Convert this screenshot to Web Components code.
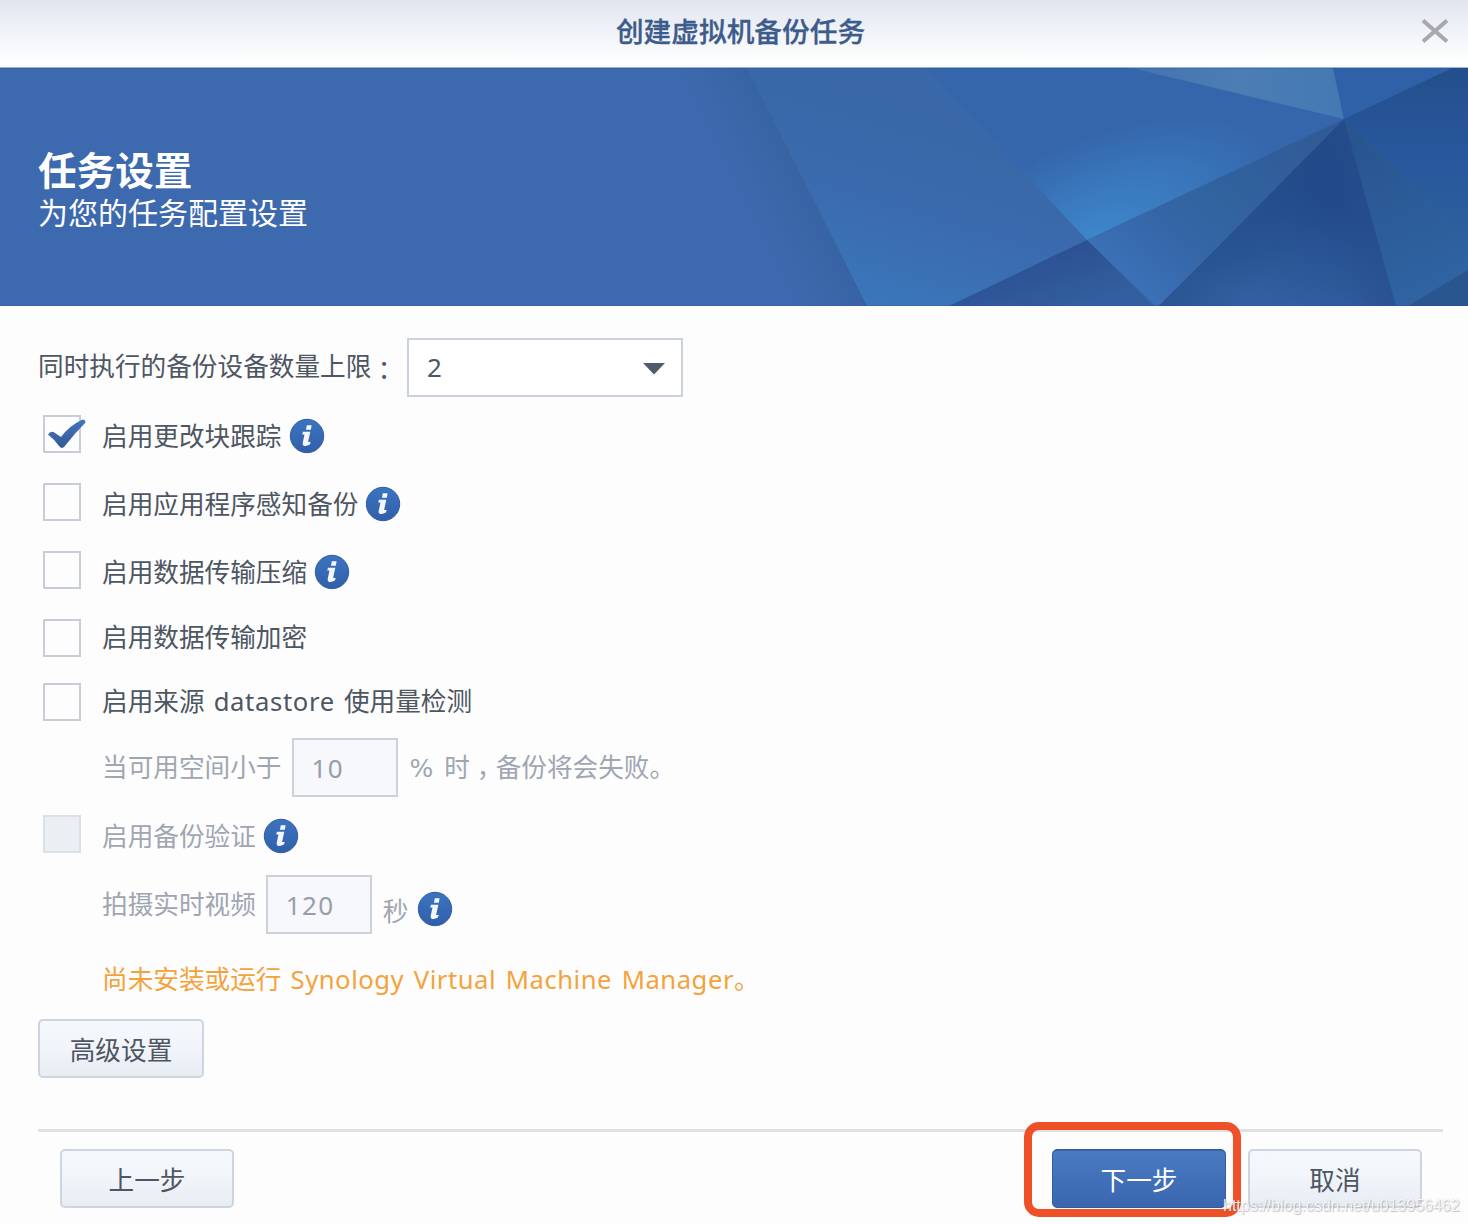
<!DOCTYPE html>
<html lang="zh-CN">
<head>
<meta charset="utf-8">
<title>创建虚拟机备份任务</title>
<style>
html,body{margin:0;padding:0}
body{width:1468px;height:1224px;overflow:hidden;background:#fdfdfe;font-family:"Noto Sans","Noto Sans CJK SC",sans-serif;font-size:25.65px;color:#4d5662}
</style>
</head>
<body>
<backup-wizard></backup-wizard>
<script>
const define=(name,html)=>{
  const t=document.createElement('template');
  t.innerHTML=html;
  customElements.define(name,class extends HTMLElement{
    constructor(){super();this.attachShadow({mode:'open'}).appendChild(t.content.cloneNode(true));}
  });
};

define('wizard-title',`<style>
:host{display:flex;height:68px;box-sizing:border-box;align-items:flex-start;background:linear-gradient(#e1e5ef,#eff2f7 45%,#fff 94%);border-bottom:1px solid #9fb6db}
h1{flex:1;margin:0;padding:9px 0 0 60px;font-size:27.7px;line-height:42px;color:#3d5c8c;text-align:center;font-family:"Noto Sans CJK SC",sans-serif;font-weight:500;-webkit-text-stroke:.3px #3d5c8c}
svg{width:28px;height:24px;margin:19px 19px 0 0}
</style><h1><slot></slot></h1><svg viewBox="0 0 28 24"><path d="M2 1.5 26 22.5M26 1.5 2 22.5" stroke="#a6a8ac" stroke-width="4" fill="none"/></svg>`);

define('wizard-banner',`<style>
:host{display:grid;height:238px;color:#fff;overflow:hidden}
svg,.t{grid-area:1/1}
svg{display:block;width:1468px;height:238px}
.t{padding:79px 0 0 38px;z-index:1;font-family:"Liberation Sans","Noto Sans CJK SC",sans-serif}
h2{margin:0;font-size:38.6px;line-height:50px;font-weight:700}
p{margin:0;font-size:30px;line-height:34px}
</style>
<svg viewBox="0 68 1468 238" preserveAspectRatio="none">
<defs>
<linearGradient id="band" gradientUnits="userSpaceOnUse" x1="692" y1="96" x2="748" y2="68"><stop offset="0" stop-color="#3967a6" stop-opacity="0"/><stop offset="1" stop-color="#3763a3"/></linearGradient>
<linearGradient id="mid" gradientUnits="userSpaceOnUse" x1="960" y1="110" x2="900" y2="310"><stop offset="0" stop-color="#3967a7"/><stop offset=".5" stop-color="#3a6aad"/><stop offset="1" stop-color="#3b76ba"/></linearGradient>
<radialGradient id="glow" gradientUnits="userSpaceOnUse" cx="0" cy="0" r="100" gradientTransform="translate(1092 240) rotate(-25) scale(2.1 1)"><stop offset="0" stop-color="#3f86cb"/><stop offset=".45" stop-color="#3a79be"/><stop offset=".75" stop-color="#376eb3"/><stop offset="1" stop-color="#3565aa"/></radialGradient>
<linearGradient id="light" gradientUnits="userSpaceOnUse" x1="1140" y1="68" x2="1344" y2="68"><stop offset="0" stop-color="#4575b0"/><stop offset=".5" stop-color="#4c7db4"/><stop offset="1" stop-color="#4379b2"/></linearGradient>
<linearGradient id="wing" gradientUnits="userSpaceOnUse" x1="1300" y1="130" x2="1150" y2="306"><stop offset="0" stop-color="#315b97"/><stop offset=".45" stop-color="#31639f"/><stop offset=".72" stop-color="#3567a9"/><stop offset="1" stop-color="#3c72b8"/></linearGradient>
<linearGradient id="deep" gradientUnits="userSpaceOnUse" x1="1344" y1="119" x2="1290" y2="306"><stop offset="0" stop-color="#1d3e80"/><stop offset=".45" stop-color="#224a8b"/><stop offset="1" stop-color="#315f9f"/></linearGradient>
<linearGradient id="deepL" gradientUnits="userSpaceOnUse" x1="1210" y1="255" x2="1250" y2="294"><stop offset="0" stop-color="#254f8b" stop-opacity=".6"/><stop offset="1" stop-color="#254f8b" stop-opacity="0"/></linearGradient>
<linearGradient id="deepR" gradientUnits="userSpaceOnUse" x1="1340" y1="260" x2="1385" y2="250"><stop offset="0" stop-color="#28508e" stop-opacity="0"/><stop offset="1" stop-color="#28508e" stop-opacity=".7"/></linearGradient>
<linearGradient id="low" gradientUnits="userSpaceOnUse" x1="1060" y1="240" x2="1080" y2="306"><stop offset="0" stop-color="#2b4f90"/><stop offset="1" stop-color="#325f9f"/></linearGradient>
<linearGradient id="rt" gradientUnits="userSpaceOnUse" x1="1440" y1="68" x2="1440" y2="240"><stop offset="0" stop-color="#234f8b"/><stop offset=".45" stop-color="#27569b"/><stop offset="1" stop-color="#2d609e"/></linearGradient>
<linearGradient id="rb" gradientUnits="userSpaceOnUse" x1="1360" y1="140" x2="1430" y2="290"><stop offset="0" stop-color="#29558f"/><stop offset="1" stop-color="#2f63a2"/></linearGradient>
</defs>
<path fill="#3d69ae" d="M0 68H1468V306H0z"/>
<path fill="url(#band)" d="M640 68H748L868 306H640z"/>
<path fill="url(#mid)" d="M747 68H1140L1344 119 949 306H867z"/>
<path fill="url(#glow)" d="M926 68H1132L1344 119 1087 240z"/>
<path fill="url(#light)" d="M1132 68H1333L1344 119z"/>
<path fill="#2f61a8" d="M1333 68H1452L1344 119z"/>
<path fill="url(#rt)" d="M1452 68H1468V242L1344 119z"/>
<path fill="url(#rb)" d="M1344 119 1468 242V306H1396z"/>
<path fill="#2a568f" d="M1408 306 1468 270V306z"/>
<path fill="url(#wing)" d="M1344 119 1087 240 1157 306z"/>
<path fill="url(#low)" d="M949 306 1087 240 1154 306z"/>
<path fill="url(#deep)" d="M1344 119 1159 306H1396z"/>
<path fill="url(#deepL)" d="M1344 119 1159 306H1396z"/>
<path fill="url(#deepR)" d="M1344 119 1159 306H1396z"/>
<path fill="#24508e" d="M0 68H1468V69H0zM0 305H1468V306H0z" opacity=".3"/>
</svg>
<div class="t"><h2><slot></slot></h2><p><slot name="sub"></slot></p></div>`);

define('form-row',`<style>
:host{display:flex;align-items:center;box-sizing:border-box;white-space:pre;line-height:36px}
:host([indent]){padding-left:102px}
:host([disabled]){color:#a0a6b1}
</style><slot></slot>`);

define('check-box',`<style>
:host{display:flex;width:38px;height:38px;box-sizing:border-box;border:2px solid #c8ced8;background:#fdfdfe;margin:0 21px 0 43px;flex:none}
:host([disabled]){background:#ebeff4;border-color:#dbe0e7}
svg{display:none;flex:none;width:44px;height:38px;margin:-2px}
:host([checked]) svg{display:block}
</style><svg viewBox="0 0 44 38"><defs><linearGradient id="g" x2="0" y2="1"><stop offset="0" stop-color="#4674ba"/><stop offset="1" stop-color="#335a96"/></linearGradient></defs><path fill="url(#g)" d="M5 19.500Q7 16 10.500 17L18 22Q26 11 38.500 5Q42 3.500 42.500 7.500Q32 18 21.500 31.500Q19 34.500 16 31Q11 24 5 19.500z"/></svg>`);

define('info-icon',`<style>
:host{display:block;width:36px;height:36px;flex:none;margin-left:7px}svg{display:block}
</style><svg width="36" height="36" viewBox="0 0 36 36"><defs><linearGradient id="b" x2="0" y2="1"><stop offset="0" stop-color="#3b74c1"/><stop offset="1" stop-color="#315fa9"/></linearGradient></defs><circle cx="18" cy="18" r="16.7" fill="url(#b)" stroke="#315da2" stroke-width="1"/><path fill="#f4f8fd" d="M17.800 7.200h4.800l-.8 4.600h-4.800zM13.900 13.800h7.400l-2.200 10.300h2.700l-1 2.500q-3 1.900-5.600 1.300-2-.5-1.500-2.900l1.800-8.500h-2.200z"/></svg>`);

define('text-field',`<style>
:host{display:flex;align-items:center;box-sizing:border-box;width:106px;height:59px;border:2px solid #ccd1da;background:#f6f8fb;color:#979ea9;padding:0 0 0 18px;flex:none;font-size:26px;letter-spacing:1.300px}
</style><slot></slot>`);

define('select-box',`<style>
:host{display:flex;align-items:center;justify-content:space-between;box-sizing:border-box;width:276px;height:59px;border:2px solid #ccd2db;background:#fff;padding:0 16px 1px 18px;flex:none;font-size:26px}
svg{display:block;margin-top:4px}
</style><slot></slot><svg width="22" height="12"><path fill="#505b6b" d="M0 0H22L11 11.5z"/></svg>`);

define('push-button',`<style>
:host{display:flex;align-items:center;justify-content:center;box-sizing:border-box;width:174px;height:59px;border:2px solid #ced5df;border-radius:5px;background:linear-gradient(#f5f8fc,#f1f4f9 50%,#e8edf4);padding-top:5px;line-height:36px;flex:none}
:host([primary]){position:relative;color:#fff;border:1px solid #315d9f;background:linear-gradient(#4a7bc3,#3966af);box-shadow:inset 0 1px #3765a7}
i{display:none}
:host([primary]) i{display:block;position:absolute;left:-29px;top:-28px;width:217px;height:95px;box-sizing:border-box;border:8px solid #ee5127;border-radius:15px}
</style><slot></slot><i></i>`);

define('backup-wizard',`<style>
:host{display:flex;flex-direction:column;width:1468px;height:1224px;position:relative}
main{display:flex;flex-direction:column;align-items:flex-start;padding-top:32px;flex:none;height:823px;box-sizing:border-box}
form-row{flex:none}
.c{font-family:"Noto Sans CJK TC",sans-serif;line-height:20px;vertical-align:-4px}
.k{vertical-align:-8px}
.p{font-family:"DejaVu Sans",sans-serif;font-size:25px;line-height:20px;padding-right:2px;padding-left:1px}
footer{display:flex;margin:0 25px 0 38px;border-top:3px solid #e0e1e3;padding:17px 21px 0 22px}
.sp{flex:1}
.gap{width:22px}
.wm{position:absolute;left:1223px;top:1196px;font:16px/20px "Liberation Sans",sans-serif;color:rgba(255,255,255,.9);text-shadow:1px 1px 1px rgba(90,95,105,.35),0 0 1px rgba(120,120,130,.35);white-space:pre}
.ls{letter-spacing:.65px}
.l2{letter-spacing:.52px}
.ws{word-spacing:2.400px}
</style>
<wizard-title>创建虚拟机备份任务</wizard-title>
<wizard-banner>任务设置<span slot="sub">为您的任务配置设置</span></wizard-banner>
<main>
<form-row style="height:59px;padding-left:38px"><span style="padding-bottom:2px">同时执行的备份设备数量上限<span class="c" lang="zh-TW">：</span></span><select-box style="margin-left:10px">2</select-box></form-row>
<form-row style="height:38px;margin-top:18px"><check-box checked></check-box><span style="padding-top:6px">启用更改块跟踪</span><info-icon style="margin-top:4px"></info-icon></form-row>
<form-row style="height:38px;margin-top:30px"><check-box></check-box><span style="padding-top:6px">启用应用程序感知备份</span><info-icon style="margin-top:4px"></info-icon></form-row>
<form-row style="height:38px;margin-top:30px"><check-box></check-box><span style="padding-top:6px">启用数据传输压缩</span><info-icon style="margin-top:4px"></info-icon></form-row>
<form-row style="height:38px;margin-top:30px"><check-box></check-box><span>启用数据传输加密</span></form-row>
<form-row style="height:38px;margin-top:26px"><check-box></check-box><span class="ws" style="padding-bottom:1px">启用来源 <span class="ls">datastore</span> 使用量检测</span></form-row>
<form-row indent disabled style="height:59px;margin-top:17px"><span>当可用空间小于</span><text-field style="margin:0 11px 0 10px">10</text-field><span class="ws"><span class="p">%</span> 时<span class="c k" lang="zh-TW">，</span>备份将会失败。</span></form-row>
<form-row disabled style="height:38px;margin-top:18px"><check-box disabled></check-box><span style="padding-top:6px">启用备份验证</span><info-icon style="margin-top:4px"></info-icon></form-row>
<form-row indent disabled style="height:59px;margin-top:22px"><span>拍摄实时视频</span><text-field style="margin:0 11px 0 10px">120</text-field><span style="padding-top:14px">秒</span><info-icon style="margin-top:9px;margin-left:8px"></info-icon></form-row>
<form-row indent style="height:36px;margin-top:28px;color:#f4a33c"><span class="ws">尚未安装或运行 <span class="l2">Synology Virtual Machine Manager</span>。</span></form-row>
<push-button style="margin:21px 0 0 38px;width:166px">高级设置</push-button>
</main>
<footer><push-button>上一步</push-button><span class="sp"></span><push-button primary>下一步</push-button><span class="gap"></span><push-button>取消</push-button></footer>
<div class="wm">https://blog.csdn.net/u013956462</div>`);
</script>
</body>
</html>
